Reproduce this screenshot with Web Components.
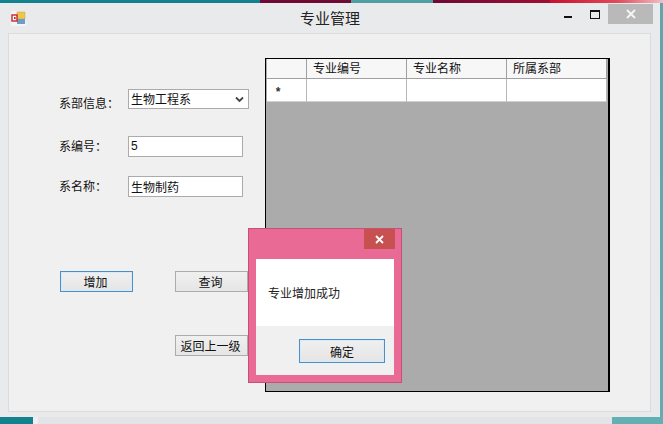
<!DOCTYPE html>
<html>
<head>
<meta charset="utf-8">
<title>专业管理</title>
<style>
  html, body { margin: 0; padding: 0; width: 663px; height: 424px; overflow: hidden; }
  body { font: 12px "Liberation Sans", "Noto Sans CJK SC", sans-serif; color: #111; }
</style>
</head>
<body>
<desk-top>
  <app-window caption="专业管理">
    <form-row label="系部信息：" class="first"><combo-box>生物工程系</combo-box></form-row>
    <form-row label="系编号："><text-box>5</text-box></form-row>
    <form-row label="系名称："><text-box>生物制药</text-box></form-row>
    <div slot="actions" class="row1">
      <win-button focused style="--w:73px">增加</win-button>
      <win-button style="--w:73px">查询</win-button>
    </div>
    <div slot="actions" class="row2">
      <win-button style="--w:73px">返回上一级</win-button>
    </div>
    <data-grid slot="grid"></data-grid>
  </app-window>
  <message-box text="专业增加成功" ok="确定"></message-box>
</desk-top>

<script>
class DeskTop extends HTMLElement {
  constructor() {
    super();
    this.attachShadow({ mode: 'open' });
    this.shadowRoot.innerHTML = `
      <style>
        :host { display: block; position: relative; width: 663px; height: 424px; overflow: hidden; background: #eaeced; }
        .top { display: flex; height: 3px; }
        .top i { display: block; }
        .bottom { display: flex; height: 7px; }
        .right { position: absolute; top: 3px; right: 0; width: 3px; height: 414px; background: linear-gradient(#5ea6aa, #63adb0); }
      </style>
      <div class="top">
        <i style="width:260px;background:#12828f"></i>
        <i style="width:91px;background:#6e0a33"></i>
        <i style="width:82px;background:#4f9ea3"></i>
        <i style="width:117px;background:linear-gradient(90deg,#6e0a33,#a00d35)"></i>
        <i style="flex:1;background:linear-gradient(90deg,#c8102e,#e24a5a 60%,#f0c0c8)"></i>
      </div>
      <slot></slot>
      <div class="bottom">
        <i style="width:33px;background:#12828f"></i>
        <i style="width:5px;background:#f2eef0"></i>
        <i style="width:574px;background:#e3e4e7"></i>
        <i style="flex:1;background:#63b0b4"></i>
      </div>
      <div class="right"></div>
    `;
  }
}

class AppWindow extends HTMLElement {
  constructor() {
    super();
    this.attachShadow({ mode: 'open' });
    this.shadowRoot.innerHTML = `
      <style>
        :host { display: flex; flex-direction: column; width: 660px; height: 414px; box-sizing: border-box; background: #e9eaec; }
        .bar { height: 30px; display: flex; flex: none; position: relative; align-items: center; justify-content: center; }
        .bar .cap { font-size: 15px; color: #222; margin-top: -1px; }
        .icon { position: absolute; left: 11px; top: 8px; }
        .btns { position: absolute; right: 7px; top: 1px; display: flex; align-items: flex-start; }
        .min { height: 2px; background: #111; margin: 12px 18px 0 0; width: 8px; }
        .max { width: 8px; height: 6px; border: 1px solid #111; border-top-width: 2px; margin: 6px 8px 0 0; }
        .close { width: 45px; height: 20px; background: #b9b9b9; display: flex; align-items: center; justify-content: center; }
        .client { flex: 1; margin: 0 9px 6px 8px; border: 1px solid #dcdcdc; background: #f0f0f0; display: flex; padding: 24px 40px 19px 50px; }
        .left { width: 206px; flex: none; display: flex; flex-direction: column; }
        .fields { display: flex; flex-direction: column; gap: 19px; padding-top: 31px; }
        .actions { margin-top: 74px; margin-left: 1px; display: flex; flex-direction: column; gap: 43px; }
        ::slotted(.row1), ::slotted(.row2) { display: flex; gap: 42px; }
        ::slotted(.row2) { padding-left: 115px; }
        .grid { flex: 1; display: flex; }
      </style>
      <div class="bar">
        <svg class="icon" width="15" height="15" viewBox="0 0 15 15">
          <rect x="0" y="0" width="15" height="15" fill="#f3f4f6"/>
          <rect x="6" y="1" width="8" height="7" fill="#eec64a" stroke="#c4a44a" stroke-width=".6"/>
          <rect x="6" y="8" width="8" height="5" fill="#6d9cc8"/>
          <rect x="1" y="4" width="5" height="6" fill="#fff" stroke="#c8262a" stroke-width="1.4"/>
          <rect x="3" y="6" width="1.6" height="2" fill="#c8262a"/>
        </svg>
        <span class="cap"></span>
        <div class="btns">
          <div class="min"></div>
          <div class="max"></div>
          <div class="close"><svg width="10" height="10" viewBox="0 0 10 10"><path d="M1 1 9 9M9 1 1 9" stroke="#f4f4f4" stroke-width="2"/></svg></div>
        </div>
      </div>
      <div class="client">
        <div class="left">
          <div class="fields"><slot></slot></div>
          <div class="actions"><slot name="actions"></slot></div>
        </div>
        <div class="grid"><slot name="grid"></slot></div>
      </div>
    `;
    this.shadowRoot.querySelector('.cap').textContent = this.getAttribute('caption');
  }
}

class FormRow extends HTMLElement {
  constructor() {
    super();
    this.attachShadow({ mode: 'open' });
    this.shadowRoot.innerHTML = `
      <style>
        :host { display: flex; align-items: center; height: 21px; }
        :host(.first) { height: 20px; margin-bottom: 8px; }
        .lbl { width: 69px; flex: none; font-size: 12px; padding-bottom: 3px; }
        :host(.first) .lbl { padding: 6px 0 0; }
      </style>
      <span class="lbl"></span><slot></slot>
    `;
    this.shadowRoot.querySelector('.lbl').textContent = this.getAttribute('label');
  }
}

class ComboBox extends HTMLElement {
  constructor() {
    super();
    this.attachShadow({ mode: 'open' });
    this.shadowRoot.innerHTML = `
      <style>
        :host { display: flex; align-items: center; justify-content: space-between; width: 121px; height: 20px; box-sizing: border-box; border: 1px solid #ababab; background: #fff; padding: 0 4px 2px 2px; }
        svg { margin-top: 2px; }
      </style>
      <slot></slot>
      <svg width="9" height="7" viewBox="0 0 9 7"><path d="M1 1.5 4.5 5 8 1.5" fill="none" stroke="#444" stroke-width="1.8"/></svg>
    `;
  }
}

class TextBox extends HTMLElement {
  constructor() {
    super();
    this.attachShadow({ mode: 'open' });
    this.shadowRoot.innerHTML = `
      <style>
        :host { display: flex; align-items: center; width: 115px; height: 21px; box-sizing: border-box; border: 1px solid #ababab; background: #fff; padding: 0 2px 1px; }
      </style>
      <slot></slot>
    `;
  }
}

class WinButton extends HTMLElement {
  constructor() {
    super();
    this.attachShadow({ mode: 'open' });
    this.shadowRoot.innerHTML = `
      <style>
        :host { display: flex; align-items: center; justify-content: center; width: var(--w, 73px); height: 21px; box-sizing: border-box; border: 1px solid #acacac; background: linear-gradient(#f0f0f0, #e5e5e5); white-space: nowrap; color: #111; padding-right: var(--pr, 2px); }
        :host([focused]) { border-color: #4a8fc7; box-shadow: inset 0 0 0 1px #d6ebfb; }
      </style>
      <slot></slot>
    `;
  }
}

class DataGrid extends HTMLElement {
  constructor() {
    super();
    this.attachShadow({ mode: 'open' });
    const heads = ['专业编号', '专业名称', '所属系部'];
    this.shadowRoot.innerHTML = `
      <style>
        :host { display: block; width: 345px; height: 334px; box-sizing: border-box; border: 1px solid #000; border-right-width: 2px; background: #ababab; padding: 0 1px; }
        .t { display: grid; grid-template-columns: 40px 100px 100px 100px; grid-template-rows: 20px 23px; }
        .t div { box-sizing: border-box; border-right: 1px solid #a0a0a0; border-bottom: 1px solid #a0a0a0; background: #fff; }
        .h { background: #f7f7f7 !important; padding: 1px 0 0 6px; line-height: 18px; }
        .c { border-right-color: #b8b8b8 !important; border-bottom-color: #d0d0d0 !important; }
        .s { display: flex; align-items: center; justify-content: center; padding-right: 17px; padding-top: 3px; font-size: 12px; font-weight: bold; color: #333; }
      </style>
      <div class="t">
        <div class="h" style="padding:0"></div>
        ${heads.map(h => `<div class="h">${h}</div>`).join('')}
        <div class="s c">*</div>
        <div class="c"></div><div class="c"></div><div class="c"></div>
      </div>
    `;
  }
}

class MessageBox extends HTMLElement {
  constructor() {
    super();
    this.attachShadow({ mode: 'open' });
    this.shadowRoot.innerHTML = `
      <style>
        :host { position: absolute; left: 248px; top: 228px; width: 154px; height: 155px; box-sizing: border-box; background: #e96a94; border: 1px solid #c65078; display: flex; flex-direction: column; padding: 0 7px 7px; }
        .cap { height: 30px; flex: none; display: flex; justify-content: flex-end; }
        .x { width: 31px; height: 20px; margin-right: -1px; background: #c75050; display: flex; align-items: center; justify-content: center; }
        .msg { height: 67px; flex: none; background: #fff; display: flex; align-items: center; padding-left: 12px; color: #222; }
        .foot { flex: 1; background: #f0f0f0; display: flex; justify-content: flex-end; align-items: flex-start; padding: 13px 9px 0 0; }
        win-button { --w: 86px; --pr: 0px; height: 24px; }
      </style>
      <div class="cap"><div class="x"><svg width="9" height="9" viewBox="0 0 9 9"><path d="M1 1 8 8M8 1 1 8" stroke="#fff" stroke-width="1.8"/></svg></div></div>
      <div class="msg"></div>
      <div class="foot"><win-button focused></win-button></div>
    `;
    this.shadowRoot.querySelector('.msg').textContent = this.getAttribute('text');
    this.shadowRoot.querySelector('win-button').textContent = this.getAttribute('ok');
  }
}

customElements.define('win-button', WinButton);
customElements.define('desk-top', DeskTop);
customElements.define('app-window', AppWindow);
customElements.define('form-row', FormRow);
customElements.define('combo-box', ComboBox);
customElements.define('text-box', TextBox);
customElements.define('data-grid', DataGrid);
customElements.define('message-box', MessageBox);
</script>
</body>
</html>
